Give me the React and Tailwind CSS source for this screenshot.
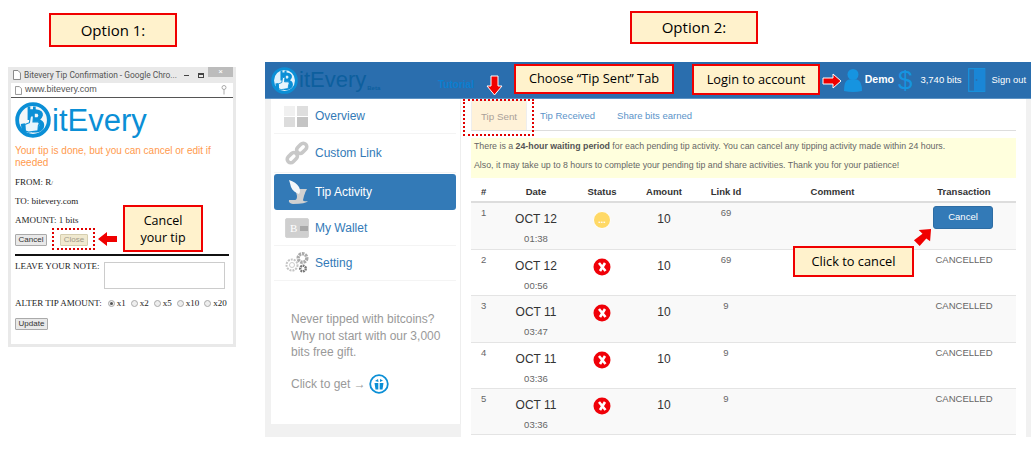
import React from "react";

const sans = "font-['Liberation_Sans',Arial,sans-serif]";
const serif = "font-['Liberation_Serif','Times_New_Roman',serif]";

function Callout({ className = "", children }) {
  return (
    <div className={`flex items-center justify-center border-[2px] border-[#f00000] bg-[#fff2cc] text-center font-['Open_Sans',sans-serif] text-black ${className}`}>
      {children}
    </div>
  );
}

function Logo({ size = 40, bg = "#f2f6f8", ring = "#0b8fd6", className = "" }) {
  return (
    <svg width={size} height={size} viewBox="0 0 40 40" className={className}>
      <circle cx="20" cy="20" r="17.6" fill={bg} stroke={ring} strokeWidth="4.2" />
      <path d="M14 8 V5 H17 V8 H20 V5 H23 V8 Q32 9 31 15 Q30 18 28 19.5 Q34 22 32 29 Q29 34 23 34 L19 34 L19 20 L14 20 Z" fill={ring} />
      <path d="M22 13 H25 Q27 15 25 17 H22 Z M22 23 H26 Q28 26 26 28 H22 Z" fill={bg} />
      <path d="M11 25 L16 23 L17 16 Q20 14 20.5 17 L20 22 L26 22 Q28 24 26 26 L25.5 32 L15 33.5 L11 32 Z" fill="#e8f5fc" stroke={ring} strokeWidth="1.3" />
      <rect x="7" y="24" width="4.5" height="9.5" fill={ring} transform="rotate(-8 9 28)" />
    </svg>
  );
}

function ArrowRight({ className = "" }) {
  return (
    <svg width="20" height="16" viewBox="0 0 20 16" className={className}>
      <path d="M1 5 H11 V1 L19 8 L11 15 V11 H1 Z" fill="#f00000" stroke="#fff" strokeWidth="1" />
    </svg>
  );
}

function ChromeWindow() {
  return (
    <div className="flex h-[280px] w-[228px] flex-col bg-[#e9e9e9] px-[3px] pb-[3px]">
      <div className="flex h-[16px] shrink-0 items-center pl-[2px] font-['Roboto',sans-serif] text-[8.4px] text-[#555]">
        <svg className="mr-[3px]" width="8" height="10" viewBox="0 0 8 10"><path d="M.5.5H5L7.5 3V9.5H.5Z" fill="#fff" stroke="#888" /></svg>
        <span className="w-[158px] whitespace-nowrap">Bitevery Tip Confirmation - Google Chro...</span>
        <span className="ml-[3px] h-[1px] w-[5px] bg-[#444]" />
        <span className="ml-[9px] h-[5px] w-[6px] border border-t-2 border-[#444]" />
        <span className="relative top-[-3px] ml-[4px] flex h-[10px] w-[25px] items-center justify-center bg-[#bcbcbc] text-[8px] leading-none text-white">×</span>
      </div>
      <div className={`flex h-[15px] shrink-0 items-center gap-[3px] border-b border-[#555] bg-white pl-[4px] pr-[6px] text-[9px] text-[#555] ${sans}`}>
        <svg width="7" height="9" viewBox="0 0 8 10"><path d="M.5.5H5L7.5 3V9.5H.5Z" fill="#fff" stroke="#888" /></svg>
        <span className="flex-1">www.bitevery.com</span>
        <svg width="6" height="10" viewBox="0 0 6 10"><circle cx="3" cy="2.5" r="2" fill="none" stroke="#aaa" /><path d="M3 4.5V9.5" stroke="#aaa" /></svg>
      </div>
      <div className="flex flex-1 flex-col bg-white px-[4px] text-[#222]">
        <div className="flex h-[42px] items-center pt-[2px]">
          <Logo size={36} />
          <span className={`ml-[1px] text-[31px] leading-none text-[#0b8fd6] ${sans}`}>itEvery</span>
        </div>
        <p className={`mt-[5px] text-[10px] leading-[12px] text-[#ff9a4d] ${sans}`}>Your tip is done, but you can cancel or edit if needed</p>
        <p className={`mt-[7px] text-[9px] leading-[12px] ${serif}`}>FROM: R<span className="text-[6px]">/</span></p>
        <p className={`mt-[6px] text-[9px] leading-[12px] ${serif}`}>TO: bitevery.com</p>
        <p className={`mt-[7px] text-[9px] leading-[12px] ${serif}`}>AMOUNT: 1 bits</p>
        <div className="mt-[8px] flex items-center gap-[13px]">
          <button className={`h-[12px] w-[32px] rounded-[1px] border border-[#aaa] bg-[#e9e9e9] text-[8px] leading-none text-[#333] ${sans}`}>Cancel</button>
          <button className={`h-[12px] w-[28px] rounded-[1px] border border-[#d5ceb0] bg-[#f0e9cf] text-[8px] leading-none text-[#a09a88] ${sans}`}>Close</button>
        </div>
        <div className="mt-[8px] h-[2px] bg-[#111]" />
        <div className="mt-[4px] flex items-start gap-[4px]">
          <span className={`whitespace-nowrap text-[9px] leading-[12px] ${serif}`}>LEAVE YOUR NOTE:</span>
          <div className="mt-[2px] h-[27px] w-[121px] border border-[#ccc] bg-white" />
        </div>
        <div className={`mt-[8px] flex items-center whitespace-nowrap text-[9px] leading-[12px] ${serif}`}>
          <span>ALTER TIP AMOUNT:</span>
          {["x1", "x2", "x5", "x10", "x20"].map((x, i) => (
            <span key={x} className={`flex items-center ${i === 0 ? "ml-[6px]" : "ml-[5px]"}`}>
              <span className="mr-[2px] flex h-[7px] w-[7px] items-center justify-center rounded-full border border-[#aaa] bg-[#eee]">
                {i === 0 && <span className="h-[3px] w-[3px] rounded-full bg-[#555]" />}
              </span>
              {x}
            </span>
          ))}
        </div>
        <button className={`mt-[9px] h-[12px] w-[33px] rounded-[1px] border border-[#aaa] bg-[#e9e9e9] text-[8px] leading-none text-[#333] ${sans}`}>Update</button>
      </div>
    </div>
  );
}

function Grid4() {
  return (
    <svg width="25" height="21" viewBox="0 0 25 21">
      <rect x="0" y="0" width="11" height="10" fill="#f0f0f0" />
      <rect x="13" y="0" width="11" height="10" fill="#dedede" />
      <rect x="0" y="11" width="11" height="10" fill="#dcdcdc" />
      <rect x="13" y="11" width="11" height="10" fill="#c4c4c4" />
    </svg>
  );
}
function ChainIcon() {
  return (
    <svg width="24" height="24" viewBox="0 0 24 24">
      <g fill="none" stroke="#c8c8c8" strokeWidth="3.6">
        <rect x="1.5" y="13" width="11.5" height="7" rx="3.5" transform="rotate(-45 7.5 16.5)" />
        <rect x="11" y="4" width="11.5" height="7" rx="3.5" transform="rotate(-45 16.5 7.5)" />
      </g>
    </svg>
  );
}
function ScrollIcon() {
  return (
    <svg width="22" height="24" viewBox="0 0 22 24">
      <path d="M5 9 H20 Q18 12 17 16 L16 20 Q16 22 21 21 Q19 24 6 24 Q1 23 2 20 L8 20 Q10 20 10 16 L9 12 Q8 10 5 9 Z" fill="#d0d0d0" />
      <path d="M2 0 Q9 2 12 7 Q14 11 12 14 Q6 12 4 7 Q3 3 2 0 Z" fill="#f4f7f9" />
    </svg>
  );
}
function WalletIcon() {
  return (
    <div className={`relative flex h-[20px] w-[24px] items-center rounded-[2px] border border-[#d4d4d4] bg-[#cfcfcf] pl-[4px] ${serif} text-[11px] text-white`}>
      B
      <span className="absolute right-0 top-[7px] h-[5px] w-[8px] bg-[#a8a8a8]" />
    </div>
  );
}
function GearsIcon() {
  return (
    <svg width="25" height="22" viewBox="0 0 25 22">
      <circle cx="8" cy="13" r="5.5" fill="none" stroke="#c4c4c4" strokeWidth="2" strokeDasharray="2 1" />
      <circle cx="8" cy="13" r="2.5" fill="none" stroke="#ccc" />
      <circle cx="18.5" cy="6" r="4.3" fill="none" stroke="#aaa" strokeWidth="3.4" strokeDasharray="2.4 .8" />
      <circle cx="19" cy="16.5" r="2.8" fill="none" stroke="#777" strokeWidth="2.4" strokeDasharray="1.8 .7" />
    </svg>
  );
}

function NavItem({ icon, label, active, className = "" }) {
  return (
    <div className={`flex items-center ${active ? "rounded-[3px] bg-[#337ab7] text-white" : "border-b border-[#f4f4f4] text-[#337ab7]"} ${className}`}>
      <div className="flex w-[35px] shrink-0 justify-end">{icon}</div>
      <span className={`ml-[6px] whitespace-nowrap text-[12px] ${sans}`}>{label}</span>
    </div>
  );
}

function Sidebar() {
  return (
    <div className="flex h-[338px] w-[196px] shrink-0 flex-col bg-[#f1f1f1] pb-[13px] pl-[6px]">
      <div className="flex flex-1 flex-col border-r border-[#eee] bg-white pl-[3px] pr-[4px]">
        <NavItem icon={<Grid4 />} label="Overview" className="h-[35px]" />
        <NavItem icon={<ChainIcon />} label="Custom Link" className="h-[39px]" />
        <NavItem icon={<ScrollIcon />} label="Tip Activity" active className="mt-[1px] h-[36px]" />
        <NavItem icon={<WalletIcon />} label="My Wallet" className="mt-[1px] h-[35px]" />
        <NavItem icon={<GearsIcon />} label="Setting" className="h-[35px]" />
        <p className={`ml-[17px] mt-[30px] w-[160px] text-[12px] leading-[16.6px] text-[#999] ${sans}`}>
          Never tipped with bitcoins? Why not start with our 3,000 bits free gift.
        </p>
        <div className={`ml-[17px] mt-[13px] flex items-center gap-[3px] text-[12px] text-[#999] ${sans}`}>
          Click to get →
          <svg width="20" height="20" viewBox="0 0 20 20">
            <circle cx="10" cy="10" r="8.8" fill="#fff" stroke="#0b8fd6" strokeWidth="1.8" />
            <path d="M5.5 9 H9.3 V15.5 H6.5 Z M10.7 9 H14.5 L13.5 15.5 H10.7 Z M6 7 L9 5 L9.5 8 Z M11 5 L14 6.5 L11 8 Z" fill="#0b8fd6" />
          </svg>
        </div>
      </div>
    </div>
  );
}

const cols = "grid grid-cols-[26px_78px_54px_70px_54px_159px_104px]";

const rows = [
  { n: 1, d: "OCT 12", t: "01:38", s: "wait", l: 69, h: "h-[47px]" },
  { n: 2, d: "OCT 12", t: "00:56", s: "x", l: 69, h: "h-[46px]" },
  { n: 3, d: "OCT 11", t: "03:47", s: "x", l: 9, h: "h-[47px]" },
  { n: 4, d: "OCT 11", t: "03:36", s: "x", l: 9, h: "h-[46px]" },
  { n: 5, d: "OCT 11", t: "03:36", s: "x", l: 9, h: "h-[46px]" },
];

function Status({ s }) {
  if (s === "wait") {
    return (
      <span className="flex h-[18px] w-[18px] items-center justify-center rounded-full border border-white bg-[#ffd966] text-[9px] font-bold leading-[6px] text-white">
        ...
      </span>
    );
  }
  return (
    <svg width="18" height="18" viewBox="0 0 18 18">
      <circle cx="9" cy="9" r="8.5" fill="#f00008" />
      <path d="M6 5 L12.5 13 M12 5 L7 13" stroke="#fff" strokeWidth="2.6" />
    </svg>
  );
}

function Row({ r, i }) {
  return (
    <div className={`${cols} ${r.h} shrink-0 border-b border-[#e4e4e4] ${i % 2 === 0 ? "bg-[#f9f9f9]" : "bg-white"} ${sans} text-[#666]`}>
      <span className="pl-[10px] pt-[4px] text-[9.5px] leading-[12px]">{r.n}</span>
      <div className="flex flex-col items-center pt-[9px]">
        <span className="text-[12px] leading-[14px] text-[#333]">{r.d}</span>
        <span className="mt-[7px] text-[9.5px] leading-[12px] text-[#666]">{r.t}</span>
      </div>
      <div className="flex justify-center pt-[8px]"><Status s={r.s} /></div>
      <span className="pt-[9px] text-center text-[12px] leading-[14px] text-[#333]">10</span>
      <span className="pt-[4px] text-center text-[9.5px] leading-[12px]">{r.l}</span>
      <span />
      {r.s === "wait" ? (
        <div className="flex justify-center pr-[2px] pt-[3px]">
          <button className="h-[23px] w-[60px] rounded-[3px] border border-[#2e6da4] bg-[#337ab7] text-[9.5px] text-white">Cancel</button>
        </div>
      ) : (
        <span className="pt-[4px] text-center text-[9.5px] leading-[12px]">CANCELLED</span>
      )}
    </div>
  );
}

function Content() {
  return (
    <div className={`ml-[10px] flex w-[545px] shrink-0 flex-col ${sans}`}>
      <div className="mt-[1px] flex h-[31px] items-end border-b border-[#ddd] text-[9.5px] text-[#5b93c9]">
        <div className="flex h-[30px] w-[56px] items-center justify-center rounded-t-[3px] border-x border-t border-[#eee] bg-[#fff2d8] pt-[3px] text-[9.8px] text-[#aaa098]">Tip Sent</div>
        <span className="ml-[13px] flex h-[30px] items-center pt-[3px]">Tip Received</span>
        <span className="ml-[22px] flex h-[30px] items-center pt-[3px]">Share bits earned</span>
      </div>
      <div className="mt-[7px] flex h-[40px] flex-col gap-[7px] bg-[#ffffdd] py-[2px] pl-[3px] text-[8.8px] leading-[12px] text-[#666]">
        <p>There is a <b className="text-[#555]">24-hour waiting period</b> for each pending tip activity. You can cancel any tipping activity made within 24 hours.</p>
        <p>Also, it may take up to 8 hours to complete your pending tip and share activities. Thank you for your patience!</p>
      </div>
      <div className={`${cols} h-[25px] shrink-0 items-center border-b-2 border-[#ddd] pt-[5px] text-[9.5px] font-bold text-[#333]`}>
        <span className="pl-[10px]">#</span>
        <span className="text-center">Date</span>
        <span className="text-center">Status</span>
        <span className="text-center">Amount</span>
        <span className="text-center">Link Id</span>
        <span className="text-center">Comment</span>
        <span className="text-center">Transaction</span>
      </div>
      {rows.map((r, i) => <Row key={r.n} r={r} i={i} />)}
    </div>
  );
}

function AppPanel() {
  return (
    <div className="flex h-[375px] w-[766px] flex-col">
      <div className="flex h-[37px] shrink-0 items-center border-b border-[#5e93c4] bg-[#2a6eae]">
        <div className="flex w-[173px] shrink-0 items-center pl-[6px]">
          <Logo size={27} bg="#dff1fb" />
          <span className={`ml-[1px] text-[22px] leading-none text-[#0d5f9e] ${sans}`}>itEvery</span>
          <span className={`mb-[-17px] ml-[1px] text-[6px] font-bold text-[#0d5f9e] ${sans}`}>Beta</span>
        </div>
        <span className={`mt-[8px] text-[10px] font-bold text-[#0a7fd0] ${sans}`}>Tutorial</span>
        <div className={`ml-auto flex items-center pr-[5px] text-white ${sans}`}>
          <svg width="20" height="24" viewBox="0 0 20 24">
            <circle cx="10" cy="6.5" r="5.5" fill="#1694e0" />
            <path d="M1 23 Q1 12 6 11.5 L14 11.5 Q19 13 19 23 Q10 25 1 23 Z" fill="#1694e0" />
          </svg>
          <span className="ml-[2px] text-[10.5px] font-bold">Demo</span>
          <span className="ml-[4px] text-[26px] leading-none text-[#1694e0]">$</span>
          <span className="ml-[8px] text-[9.5px]">3,740 bits</span>
          <svg className="ml-[6px]" width="18" height="24" viewBox="0 0 18 24">
            <rect x="0.7" y="0.7" width="16" height="22.6" fill="none" stroke="#1694e0" strokeWidth="1.2" />
            <path d="M6 1 H17 V23 H6 Z" fill="#1a86d6" />
            <circle cx="8.5" cy="12" r="0.9" fill="#2a6eae" />
          </svg>
          <span className="ml-[6px] text-[9.4px]">Sign out</span>
        </div>
      </div>
      <div className="flex flex-1">
        <Sidebar />
        <Content />
        <div className="ml-[10px] h-full w-[5px] bg-[#f1f1f1]" />
      </div>
    </div>
  );
}

export default function App() {
  return (
    <div className="relative flex h-[457px] w-[1036px] overflow-hidden bg-white">
      <div className="ml-[8px] flex w-[228px] shrink-0 flex-col">
        <Callout className="ml-[41px] mt-[13px] h-[34px] w-[128px] text-[15px]">Option 1:</Callout>
        <div className="mt-[20px]"><ChromeWindow /></div>
      </div>
      <div className="ml-[29px] flex w-[766px] shrink-0 flex-col">
        <Callout className="ml-[365px] mt-[11px] h-[33px] w-[128px] text-[15px]">Option 2:</Callout>
        <div className="mt-[18px]"><AppPanel /></div>
      </div>

      {/* annotations laid over the screenshots */}
      <div className="absolute left-[52px] top-[228px] h-[22px] w-[43px] border-[2px] border-dotted border-[#e00000]" />
      <svg className="absolute left-[97px] top-[231px]" width="21" height="16" viewBox="0 0 21 16"><path d="M1 8 L10 1 V5 H20 V11 H10 V15 Z" fill="#f00000" /></svg>
      <Callout className="absolute left-[123px] top-[205px] h-[47px] w-[80px] text-[12.5px] leading-[17px]">Cancel<br />your tip</Callout>

      <svg className="absolute left-[486px] top-[75px]" width="17" height="21" viewBox="0 0 17 21"><path d="M5 1 H12 V11 H16 L8.5 20 L1 11 H5 Z" fill="#f00000" stroke="#fff" strokeWidth="1" /></svg>
      <div className="absolute left-[463px] top-[99px] h-[37px] w-[71px] border-[2px] border-dotted border-[#e00000]" />
      <Callout className="absolute left-[514px] top-[64px] h-[30px] w-[160px] text-[12.8px]">Choose “Tip Sent” Tab</Callout>
      <Callout className="absolute left-[692px] top-[64px] h-[31px] w-[128px] text-[12.8px]">Login to account</Callout>
      <ArrowRight className="absolute left-[822px] top-[73px]" />
      <svg className="absolute left-[913px] top-[228px]" width="19" height="19" viewBox="0 0 20 20"><path d="M7 19 L1 13 L10 6 L6 2 L19 1 L18 14 L14 11 Z" fill="#f00000" /></svg>
      <Callout className="absolute left-[793px] top-[246px] h-[31px] w-[121px] text-[12.8px]">Click to cancel</Callout>
    </div>
  );
}
